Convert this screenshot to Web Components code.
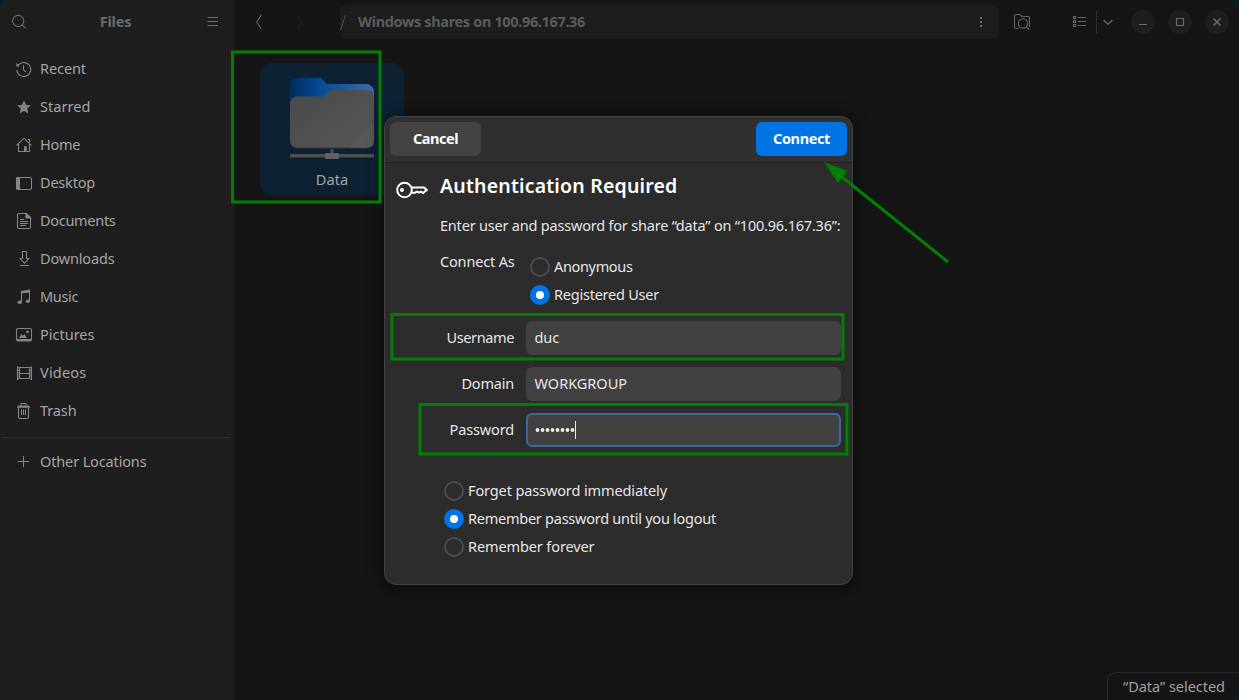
<!DOCTYPE html>
<html lang="en">
<head>
<meta charset="utf-8">
<title>Files</title>
<style>
html,body{margin:0;height:100%;overflow:hidden;background:#0a1c24}
body{font-family:"Noto Sans","Open Sans",sans-serif;font-size:14.5px;color:#a5a5a5}
</style>
</head>
<body>
<files-window></files-window>
<script>
const define = (name, html, setup) => {
  const tpl = document.createElement('template');
  tpl.innerHTML = html;
  customElements.define(name, class extends HTMLElement {
    constructor() {
      super();
      this.attachShadow({ mode: 'open' }).append(tpl.content.cloneNode(true));
    }
    connectedCallback() { if (setup) setup(this, this.shadowRoot); }
  });
};

/* Line of text that spreads its letters over the width in its "w" attribute. */
define('fit-text', `<style>:host{display:inline-block;white-space:pre;height:20px;line-height:18px;text-align:left}</style><span><slot></slot></span>`, (el, root) => {
  const w = parseFloat(el.getAttribute('w'));
  const span = root.querySelector('span');
  const natural = span.getBoundingClientRect().width;
  span.style.letterSpacing = ((w - natural) / el.textContent.length).toFixed(4) + 'px';
  el.style.width = w + 'px';
});

const icons = {
  search: '<circle cx="6.2" cy="7" r="5.6"/><path d="M10.200 11 13.500 14.300"/>',
  menu: '<path d="M2.500 3.500h10.500M2.500 7.500h10.500M2.500 11.500h10.500"/>',
  recent: '<path d="M2.200 4.200A7 7 0 1 1 .800 9"/><path d="M.3 1.800v3.700H4z" fill="currentColor" stroke="none"/><path d="M7.500 4.300v4.400l2.400 2.200"/>',
  star: '<path fill="currentColor" stroke="none" d="m8 1.200 2 4.700 4.900.4-3.700 3.300 1.100 4.900L8 11.900l-4.300 2.600 1.100-4.900L1.100 6.300 6 5.900z"/>',
  home: '<path d="M.6 8.300 8 1.200l7.400 7.100M2.500 7v7.500h6M13.500 7v7.500h-3"/><path d="M8 9.200h2.800V15H8z" fill="currentColor" stroke="none"/><path d="M12 2.500h1.500v3"/>',
  desktop: '<rect x=".5" y="2.500" width="15" height="12" rx="1.500"/><path d="M1 3h2.500v11H1z" fill="currentColor"/>',
  document: '<path d="M3 .500h7.500l4 4V14a1.500 1.500 0 0 1-1.500 1.500H3A1.500 1.500 0 0 1 1.500 14V2A1.500 1.500 0 0 1 3 .500z"/><path d="M10 .500v4.500h4.500z" fill="currentColor"/><path d="M4 6.500h4M4 8.500h8M4 10.500h8M4 12.500h6"/>',
  download: '<path d="M6.500.500h4v7h2.300L8.500 12.300 4.200 7.500h2.300zM4 14.500h9"/>',
  music: '<path d="M5.500 13V2.800M13.500 1.100V12"/><path d="M5 2 14 .600v3l-9 1z" fill="currentColor" stroke="none"/><ellipse cx="3.800" cy="13.300" rx="2.200" ry="1.800" fill="currentColor" stroke="none"/><ellipse cx="11.900" cy="12.200" rx="2.100" ry="1.800" fill="currentColor" stroke="none"/>',
  picture: '<rect x=".5" y="1.500" width="15" height="12.500" rx="1.500"/><path d="M1 12h14v2H1zM3 11l2.300-4L7 9l1.200-2.300L11 11z" fill="currentColor" stroke="none"/><circle cx="11.500" cy="4.800" r="1.400" fill="currentColor" stroke="none"/>',
  video: '<path d="M3.500 2v12M13.500 2v12M3.500 2.500h10M3.500 8.500h10M3.500 13.500h10"/><path d="M1.500 1.500v13.500M15.500 1.500v13.500"/><path d="M2.500 2v13M14.500 2v13" stroke-dasharray="1 1.800"/>',
  trash: '<path d="M2.500 5v9a1.500 1.500 0 0 0 1.500 1.500h7a1.500 1.500 0 0 0 1.500-1.500V5"/><path d="M5 2.500V.500h5v2"/><path d="M1 4.500V3.800L2.500 2.500h10L14 3.800v.7z" fill="currentColor" stroke="none"/><path d="M1.200 4h12.600M5.500 6.500V12M7.500 6.500V12M9.500 6.500V12"/>',
  plus: '<path d="M2 7.500h11M7.500 2v11"/>',
  back: '<path d="M10.300.800 5.800 8l4.500 7.200"/>',
  forward: '<path d="M6.500.800 10.500 8l-4 7.200"/>',
  dots: '<path fill="currentColor" stroke="none" d="M7 3h2v2H7zM7 7h2v2H7zM7 11h2v2H7z"/>',
  folderSearch: '<path d="M4.500 14.500H2A1.500 1.500 0 0 1 .500 13V2A1.500 1.500 0 0 1 2 .500h4l2 2h6A1.500 1.500 0 0 1 15.500 4v9"/><circle cx="9" cy="9.500" r="4.700"/><path d="m12.500 13 2.500 2.500"/>',
  list: '<path d="M.5 2.500h2v2h-2zM.5 6.500h2v2h-2zM.5 10.500h2v2h-2zM4.500 3.500H13M4.500 7.500H13M4.500 11.500H13"/>',
  chevron: '<path d="m3.500 6 4.500 4.200L12.500 6" stroke-width="1.500"/>',
  minimize: '<path d="M4 10.500h8"/>',
  maximize: '<path d="M4.500 4.500h7v7h-7z"/>',
  close: '<path d="m4.500 4.500 7 7m0-7-7 7" stroke-width="1.500"/>'
};
define('ui-icon', `<style>:host{display:block;width:16px;height:16px;flex:none}svg{display:block;overflow:visible}</style>
<svg width="16" height="16" viewBox="0 0 16 16" fill="none" stroke="currentColor" stroke-width="1.1"></svg>`,
  (el, root) => { root.querySelector('svg').innerHTML = icons[el.getAttribute('name')]; });

define('side-item', `<style>:host{display:flex;align-items:center;height:38px;padding-left:16px;gap:8px}ui-icon{color:#858585}</style><slot></slot>`, (el, root) => {
  const icon = document.createElement('ui-icon');
  icon.setAttribute('name', el.getAttribute('icon'));
  root.querySelector('slot').before(icon);
});

define('side-bar', `<style>
:host{display:block;width:234px;flex:none;background:#1e1e1e;border-right:1px solid #191919}
header{height:44px;display:flex;align-items:center;justify-content:space-between;padding:0 13px 0 12px;color:#6b6b6b;font-weight:700}
header fit-text{margin-right:2px}
nav{padding-top:6px}
hr{border:0;height:1px;background:#303030;margin:7px 4px 5px 2px}
</style>
<header><ui-icon name="search"></ui-icon><fit-text w="31.500">Files</fit-text><ui-icon name="menu"></ui-icon></header>
<nav>
<side-item icon="recent"><fit-text w="46">Recent</fit-text></side-item>
<side-item icon="star"><fit-text w="50.500">Starred</fit-text></side-item>
<side-item icon="home"><fit-text w="40">Home</fit-text></side-item>
<side-item icon="desktop"><fit-text w="55">Desktop</fit-text></side-item>
<side-item icon="document"><fit-text w="75.500">Documents</fit-text></side-item>
<side-item icon="download"><fit-text w="74.500">Downloads</fit-text></side-item>
<side-item icon="music"><fit-text w="38">Music</fit-text></side-item>
<side-item icon="picture"><fit-text w="54.500">Pictures</fit-text></side-item>
<side-item icon="video"><fit-text w="46.500">Videos</fit-text></side-item>
<side-item icon="trash"><fit-text w="36.500">Trash</fit-text></side-item>
<hr>
<side-item icon="plus"><fit-text w="106.500">Other Locations</fit-text></side-item>
</nav>`);

define('top-bar', `<style>
:host{display:flex;align-items:center;height:44px;color:#646464}
.nav{display:flex;gap:24px;padding-left:16px;width:89px}
.next{color:#212121}
.path{box-sizing:border-box;width:659px;height:34px;border-radius:6px;background:#1d1d1d;display:flex;align-items:center;padding:0 10px 0 0;font-weight:700;color:#5c5c5c}
.path svg{display:block;margin-right:11px}
.path ui-icon{margin-left:auto;color:#6c6c6c}
.folder{margin-left:15px}.list{margin-left:43px}
i{width:1px;height:22px;background:#303030;margin:0 3px 0 7px}
.win{display:flex;gap:13px;margin-left:15px}
.win span{width:24px;height:24px;border-radius:50%;background:#1e1e1e;display:flex;align-items:center;justify-content:center;color:#6c6c6c}
</style>
<div class="nav"><ui-icon name="back"></ui-icon><ui-icon class="next" name="forward"></ui-icon></div>
<div class="path"><svg width="7" height="18" viewBox="0 0 7 18" fill="none" stroke="#555"><path d="M.500 17 5.500 2"/></svg><fit-text w="227">Windows shares on 100.96.167.36</fit-text><ui-icon name="dots"></ui-icon></div>
<ui-icon class="folder" name="folderSearch"></ui-icon><ui-icon class="list" name="list"></ui-icon><i></i><ui-icon name="chevron"></ui-icon>
<div class="win"><span><ui-icon name="minimize"></ui-icon></span><span><ui-icon name="maximize"></ui-icon></span><span><ui-icon name="close"></ui-icon></span></div>`);

define('folder-tile', `<style>
:host{display:flex;flex-direction:column;align-items:center;box-sizing:border-box;width:144px;height:132px;border-radius:12px;background:#0e2133;padding-top:15px}
svg{display:block;margin-bottom:11px}</style>
<svg width="84" height="81" viewBox="0 0 84 81">
<defs><linearGradient id="b"><stop offset="0" stop-color="#012b5e"/><stop offset=".35" stop-color="#054a96"/><stop offset="1" stop-color="#3c6ba6"/></linearGradient>
<linearGradient id="g" x2="1" y2="1"><stop offset="0" stop-color="#494949"/><stop offset="1" stop-color="#575757"/></linearGradient></defs>
<path fill="url(#b)" d="M6 0h25l6 6h39a8 8 0 0 1 8 8v14H0V6a6 6 0 0 1 6-6z"/>
<path fill="url(#g)" d="M7 18.500h26l5-5q1.500-1.500 3.500-1.500H77a7 7 0 0 1 7 7v44a7 7 0 0 1-7 7H7a7 7 0 0 1-7-7V25a7 7 0 0 1 7-6.500z"/>
<path d="M2.500 68q2 2 4.500 2h70q3 0 5-2" fill="none" stroke="#343638"/>
<path fill="#5c5c5c" opacity=".5" d="M84 45v18a7 7 0 0 1-7 7H59z"/>
<path fill="#4e4e4e" d="M0 76h84v3.500H0zM40.500 71h3v5h-3z"/><rect x="35" y="75" width="14" height="6" rx="1" fill="#606060"/>
</svg><fit-text w="32.500">Data</fit-text>`);

define('main-view', `<style>
:host{display:flex;flex-direction:column;flex:1;background:#151515}
.files{flex:1;padding:19px 0 0 25px}
footer{align-self:flex-end;box-sizing:border-box;width:132px;height:28px;border:1px solid #2a2a2a;border-width:1px 0 0 1px;border-radius:9px 0 0 0;padding:4px 0 0 15px;color:#a0a0a0}
footer fit-text{display:block}
</style><top-bar></top-bar><div class="files"><folder-tile></folder-tile></div><footer><fit-text w="102">“Data” selected</fit-text></footer>`);

define('push-button', `<style>:host{box-sizing:border-box;width:91px;height:34px;border-radius:6px;background:#434343;color:#fff;font-weight:700;display:flex;align-items:center;justify-content:center}:host([primary]){background:#0073e5}</style><slot></slot>`);
define('radio-option', `<style>:host{display:flex;align-items:center;height:28px;gap:4px}
b{box-sizing:border-box;width:20px;height:20px;border-radius:50%;border:2px solid #4b4b4b}
:host([checked]) b{border:6px solid #0073e5;background:#fff}</style><b></b><slot></slot>`);
define('entry-row', `<style>:host{display:grid;grid-template-columns:74px 315px;column-gap:12px;align-items:center;justify-items:end;height:34px}
.box{box-sizing:border-box;justify-self:stretch;height:34px;border-radius:6px;background:#414141;display:flex;align-items:center;padding-left:8.500px}
:host([focused]) .box{border:2px solid #3c6a9f;padding-left:7px}</style><slot name="label"></slot><div class="box"><slot></slot></div>`);
define('password-value', `<style>:host{display:flex;align-items:center}svg{display:block}</style>
<svg width="45" height="20" viewBox="0 0 45 20" fill="#eee"><circle cx="2.500" cy="10" r="1.900"/><circle cx="7.500" cy="10" r="1.900"/><circle cx="12.500" cy="10" r="1.900"/><circle cx="17.500" cy="10" r="1.900"/><circle cx="22.500" cy="10" r="1.900"/><circle cx="27.500" cy="10" r="1.900"/><circle cx="32.500" cy="10" r="1.900"/><circle cx="37.500" cy="10" r="1.900"/><path d="M40 1h1v18h-1z"/></svg>`);

define('auth-dialog', `<style>
:host{display:block;box-sizing:border-box;width:469px;height:469px;border:1px solid #434343;border-radius:12px;background:#2c2c2c;color:#e6e6e6;box-shadow:0 3px 14px 5px #0005;overflow:hidden}
header{box-sizing:border-box;height:46px;background:#303030;border-bottom:1px solid #222;display:flex;justify-content:space-between;padding:5px 5px 0}
.body{display:grid;grid-template-columns:32px 402px;column-gap:12px;padding:12px 0 0 11px}
.key{margin-top:5px}
h1{margin:0;font-size:19.500px;font-weight:600;color:#fff;height:30px;padding-top:1px}
h1 fit-text{line-height:20px;vertical-align:top}
.intro{height:31px;padding-top:10px}
.intro fit-text{vertical-align:top}
.connect{display:grid;grid-template-columns:75px 1fr;column-gap:15px;height:74px}
.connect>fit-text{margin-top:5px}
.connect>div{padding-top:6px}
.fields{display:grid;gap:12px}
.keep{padding:30px 0 0 4px}
</style>
<header><push-button><fit-text w="45">Cancel</fit-text></push-button><push-button primary><fit-text w="57">Connect</fit-text></push-button></header>
<div class="body">
<svg class="key" width="32" height="20" viewBox="0 0 32 20" fill="none" stroke="#fff" stroke-width="2"><circle cx="8.500" cy="10" r="7.300"/><circle cx="6" cy="10" r="2" fill="#fff" stroke="none"/><path d="M15 7.500h13l2.700 2.500-3.700 3-2-1.300-2 1-2-1-2 1h-4"/></svg>
<div><h1><fit-text w="237.500">Authentication Required</fit-text></h1>
<div class="intro"><fit-text w="400.500">Enter user and password for share “data” on “100.96.167.36”:</fit-text></div>
<div class="connect"><fit-text w="74.500">Connect As</fit-text><div><radio-option><fit-text w="78.500">Anonymous</fit-text></radio-option><radio-option checked><fit-text w="105">Registered User</fit-text></radio-option></div></div>
<div class="fields">
<entry-row><fit-text slot="label" w="67.500">Username</fit-text><fit-text w="24.500">duc</fit-text></entry-row>
<entry-row><fit-text slot="label" w="52.500">Domain</fit-text><fit-text w="92.500">WORKGROUP</fit-text></entry-row>
<entry-row focused><fit-text slot="label" w="64.500">Password</fit-text><password-value></password-value></entry-row></div>
<div class="keep"><radio-option><fit-text w="199">Forget password immediately</fit-text></radio-option><radio-option checked><fit-text w="248">Remember password until you logout</fit-text></radio-option><radio-option><fit-text w="126.500">Remember forever</fit-text></radio-option></div>
</div></div>`);

define('mark-layer', `<style>:host{display:block;pointer-events:none}svg{display:block}</style>
<svg width="1239" height="700" fill="none" stroke="#008000" stroke-width="3"><rect x="232.500" y="52" width="147.500" height="150"/><rect x="392" y="314.500" width="451" height="44.500"/><rect x="420" y="404.500" width="427" height="49.500"/><path d="M948 262 842 177"/><path d="M824 162 847.500 171 838 183z" fill="#008000" stroke="none"/></svg>`);

define('files-window', `<style>
:host{display:flex;position:relative;width:1239px;height:700px;overflow:hidden;border-radius:8px 12px 12px 0}
auth-dialog{position:absolute;left:384px;top:116px}
mark-layer{position:absolute;inset:0}
</style><side-bar></side-bar><main-view></main-view><auth-dialog></auth-dialog><mark-layer></mark-layer>`);
</script>
</body>
</html>
